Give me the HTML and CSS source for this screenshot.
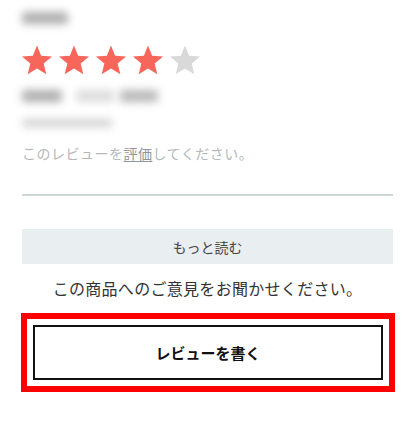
FILE: index.html
```html
<!DOCTYPE html>
<html lang="ja">
<head>
<meta charset="utf-8">
<link rel="stylesheet" href="styles.css">
</head>
<body>
<div class="page">
  <div class="blur name"></div>
  <div class="stars">
    <svg class="star on" viewBox="0 0 24 24"><path d="M12 1.2l3.1 7.6 8.2.6-6.3 5.3 2 8-7-4.4-7 4.4 2-8L.7 9.4l8.2-.6z"/></svg>
    <svg class="star on" viewBox="0 0 24 24"><path d="M12 1.2l3.1 7.6 8.2.6-6.3 5.3 2 8-7-4.4-7 4.4 2-8L.7 9.4l8.2-.6z"/></svg>
    <svg class="star on" viewBox="0 0 24 24"><path d="M12 1.2l3.1 7.6 8.2.6-6.3 5.3 2 8-7-4.4-7 4.4 2-8L.7 9.4l8.2-.6z"/></svg>
    <svg class="star on" viewBox="0 0 24 24"><path d="M12 1.2l3.1 7.6 8.2.6-6.3 5.3 2 8-7-4.4-7 4.4 2-8L.7 9.4l8.2-.6z"/></svg>
    <svg class="star off" viewBox="0 0 24 24"><path d="M12 1.2l3.1 7.6 8.2.6-6.3 5.3 2 8-7-4.4-7 4.4 2-8L.7 9.4l8.2-.6z"/></svg>
  </div>
  <div class="blur-row">
    <div class="blur seg1"></div>
    <div class="blur seg2"></div>
    <div class="blur seg3"></div>
  </div>
  <div class="blur line3"></div>
  <p class="prompt">このレビューを<span class="rate">評価</span>してください。</p>
  <div class="divider"></div>
  <div class="more">もっと読む</div>
  <p class="ask">この商品へのご意見をお聞かせください。</p>
  <div class="highlight">
    <div class="write">レビューを書く</div>
  </div>
</div>
</body>
</html>
```

FILE: styles.css
```css
html, body {
  margin: 0;
  padding: 0;
  background: #fff;
}
body {
  font-family: "Noto Sans CJK JP", "Noto Sans", sans-serif;
}
.page {
  display: flex;
  flex-direction: column;
  padding: 0 23px 0 22px;
}
.blur {
  background: #9a9a9a;
  filter: blur(4px);
  border-radius: 3px;
}
.name {
  margin-top: 12px;
  width: 46px;
  height: 12px;
  opacity: 0.8;
}
.stars {
  display: flex;
  gap: 5px;
  margin-top: 20px;
  margin-left: -1px;
}
.star {
  width: 32px;
  height: 32px;
}
.star.on { fill: #f7665b; }
.star.off { fill: #d9d9d9; }
.blur-row {
  display: flex;
  margin-top: 14px;
  height: 12px;
}
.seg1 { width: 40px; opacity: 0.8; }
.seg2 { width: 38px; margin-left: 14px; opacity: 0.35; }
.seg3 { width: 38px; margin-left: 6px; opacity: 0.7; }
.line3 {
  margin-top: 17px;
  width: 90px;
  height: 8px;
  opacity: 0.45;
}
.prompt {
  margin: 16px 0 0;
  font-size: 14px;
  line-height: 20px;
  color: #b4b9bc;
  letter-spacing: 0.5px;
}
.rate {
  color: #90979b;
  text-decoration: underline;
  text-underline-offset: 2px;
}
.divider {
  margin-top: 31px;
  height: 2px;
  background: #cfd6d6;
}
.more {
  margin-top: 33px;
  height: 35px;
  background: #e9eef0;
  color: #444;
  font-size: 14px;
  display: flex;
  align-items: center;
  justify-content: center;
}
.ask {
  margin: 12px 0 0;
  text-align: center;
  font-size: 16px;
  line-height: 24px;
  color: #333;
  letter-spacing: 0.3px;
}
.highlight {
  margin: 13px -2px 0 -1px;
  border: 6px solid #ff0000;
  padding: 6px;
}
.write {
  height: 51px;
  border: 2px solid #111;
  display: flex;
  align-items: center;
  justify-content: center;
  font-size: 15px;
  font-weight: bold;
  color: #111;
}
```
